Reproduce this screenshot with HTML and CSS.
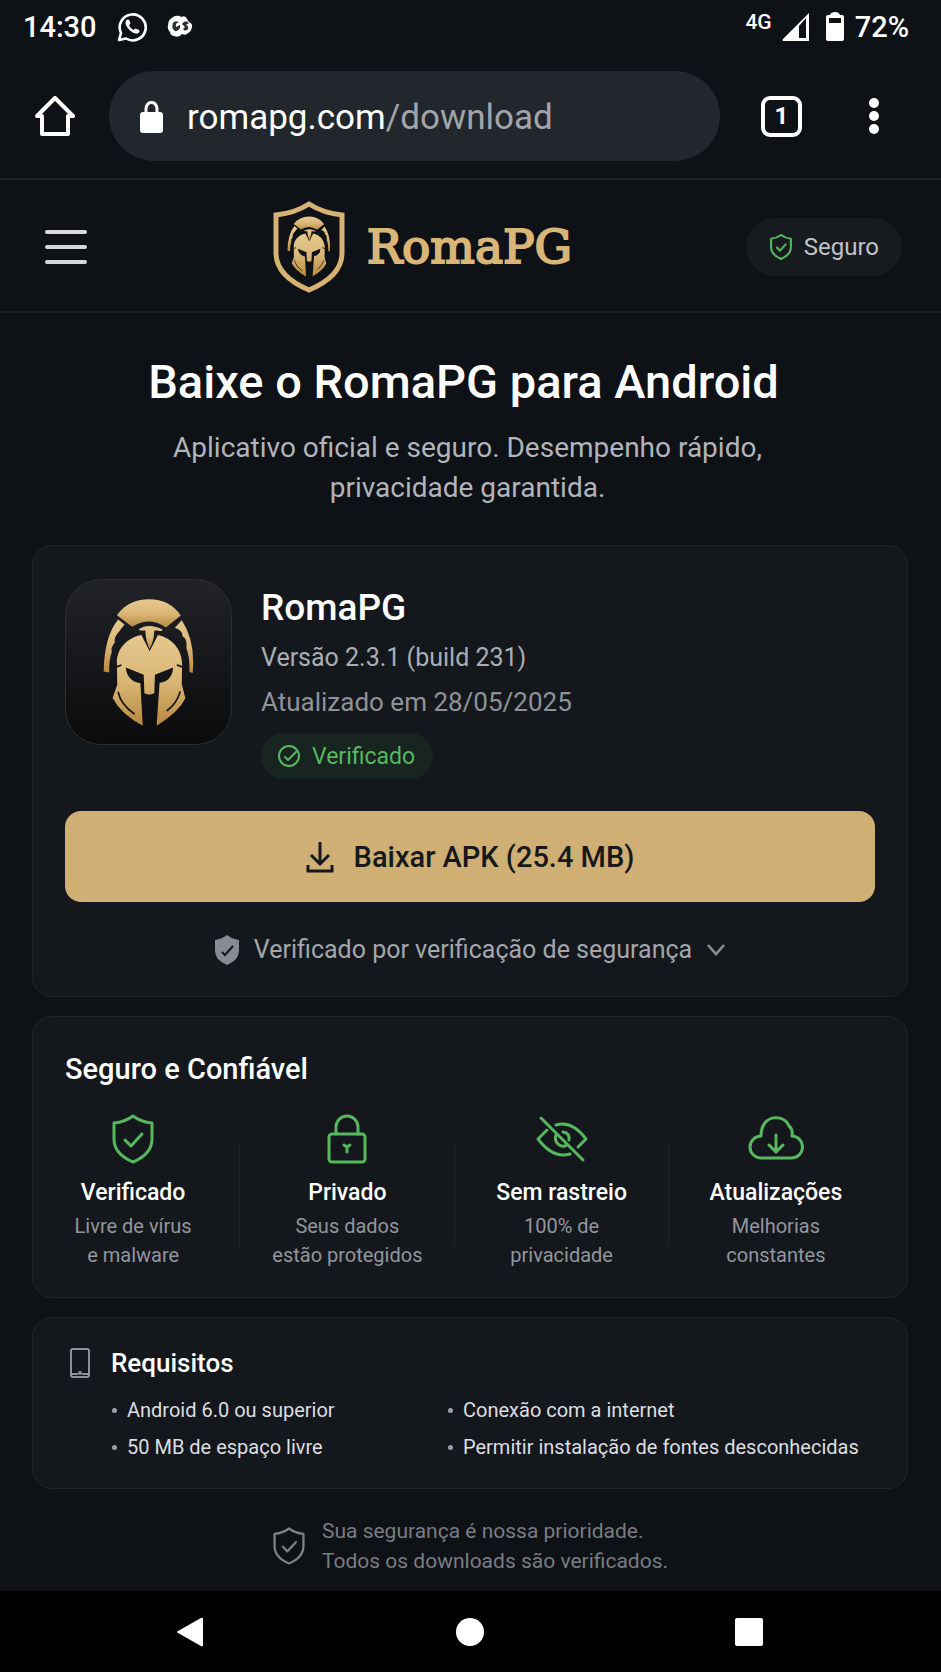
FILE: index.html
```html
<!DOCTYPE html>
<html lang="pt-BR">
<head>
    <meta charset="UTF-8">
    <meta name="viewport" content="width=device-width, initial-scale=1.0">
    <title>RomaPG - Download</title>
    <link rel="stylesheet" href="styles.css">
</head>
<body>
    <!-- shared shapes -->
    <svg class="defs" aria-hidden="true">
        <defs>
            <linearGradient id="gold" x1="0" y1="0" x2="0" y2="1">
                <stop offset="0" stop-color="#e6c88e"/>
                <stop offset="0.5" stop-color="#dab777"/>
                <stop offset="1" stop-color="#b8893f"/>
            </linearGradient>
            <symbol id="helmet" viewBox="186 111 278 388">
                <g fill="url(#gold)">
                    <path d="M228 162Q262 114 325 114Q388 114 421 163L376 199Q350 181 325 181Q300 181 274 197Z"/>
                    <path d="M293 205Q325 184 367 206Q362 212 352 208L341 208Q340 240 327 264Q315 240 314 208Q300 210 293 205Z"/>
                    <path d="M232 175Q190 225 188 332L205 335Q203 300 213 272Q208 262 222 244Q216 232 236 210L251 190Z"/>
                    <path d="M424 177L403 200Q428 208 426 226Q441 232 438 262Q449 290 447 334L457 337Q466 240 424 177Z"/>
                    <path d="M302 222L327 271L352 222C395 232 425 265 425 310L424 370L435 413Q415 455 348 496L357 366Q395 362 398 320L343 342L341 398Q326 406 311 398L309 342L255 320Q258 360 299 368L306 496Q240 460 215 412L229 372L228 305C228 262 260 230 302 222Z"/>
                </g>
                <g fill="none" stroke="#15161a" stroke-width="5" stroke-linecap="round">
                    <path d="M232 395Q240 432 280 460M419 394Q408 430 380 450M225 319L240 313M411 313L427 319"/>
                </g>
            </symbol>
            <symbol id="shield-check" viewBox="0 0 42 50">
                <path d="M21 2Q29 8 40 9V25Q40 40 21 48Q2 40 2 25V9Q13 8 21 2Z"/>
                <path d="M13 26L19 32L30 20"/>
            </symbol>
        </defs>
    </svg>

    <div class="status-bar">
        <div class="status-left">
            <span>14:30</span>
            <svg width="30" height="30" viewBox="0 0 30 30" fill="none">
                <path d="M2 28L4 21A13 13 0 1 1 9 26.500Z" stroke="#fff" stroke-width="2.600" stroke-linejoin="round"/>
                <path d="M9 8.500Q11 6.500 12.500 8.500L13.500 11.500L12 13.500Q13.500 16.500 16.500 18L18.500 16.500L22 18Q23.500 19.500 21.500 21Q18 23 13 18.500Q7 13 9 8.500Z" fill="#fff"/>
            </svg>
            <svg width="26" height="24" viewBox="0 0 26 24" fill="none">
                <path d="M8 1Q13 0 14 2Q19 0 20 4L22 7Q26 9 25 12Q24 17 21 18Q19 21 15 19Q12 23 7 21Q3 20 3 17Q0 14 1 10Q1 4 8 1Z" fill="#fff"/>
                <path d="M6 8Q8 5 12 7Q8 8 9 12L13 10V13Q11 17 8 16Q4 13 6 8Z" fill="#2c3034"/>
                <path d="M15 9Q18 4 22 8L19 10Q22 11 21 14Q18 17 16 14L18 12Z" fill="#2c3034"/>
            </svg>
        </div>
        <div class="status-right">
            <span class="network">4G</span>
            <svg width="28" height="28" viewBox="0 0 28 28" fill="#fff">
                <path fill-rule="evenodd" d="M27 0V28H1Q0 27 1 26ZM17 13V25H24V5Z"/>
            </svg>
            <svg class="battery" width="20" height="30" viewBox="0 0 20 30" fill="#fff">
                <path fill-rule="evenodd" d="M5 3Q6 0 10 0Q14 0 15 3H17Q19 3 19 5V27Q19 29 17 29H3Q1 29 1 27V5Q1 3 3 3ZM4 6V11H16V6Z"/>
            </svg>
            <span>72%</span>
        </div>
    </div>

    <div class="browser-bar">
        <button class="icon-btn" aria-label="Página inicial">
            <svg width="40" height="40" viewBox="0 0 40 40" fill="none" stroke="#fff" stroke-width="4" stroke-linejoin="round" stroke-linecap="round">
                <path d="M7 20H2L20 2L38 20H33V38H7Z"/>
            </svg>
        </button>
        <button class="address">
            <svg width="23" height="32" viewBox="0 0 23 32">
                <rect x="0" y="11" width="23" height="21" rx="3" fill="#fff"/>
                <path d="M6 13V8A5 6 0 0 1 17 8V13" fill="none" stroke="#fff" stroke-width="3"/>
            </svg>
            <span>romapg.com<span class="path">/download</span></span>
        </button>
        <button class="tabs" aria-label="Abas abertas">1</button>
        <button class="icon-btn more" aria-label="Mais opções">
            <svg width="10" height="36" viewBox="0 0 10 36" fill="#fff">
                <circle cx="5" cy="5" r="5"/>
                <circle cx="5" cy="18" r="5"/>
                <circle cx="5" cy="31" r="5"/>
            </svg>
        </button>
    </div>

    <header class="site-header">
        <button class="icon-btn" aria-label="Menu">
            <svg width="42" height="34" viewBox="0 0 42 34" stroke="#d6d8db" stroke-width="4" stroke-linecap="round">
                <path d="M2 2H40M2 17H40M2 32H40"/>
            </svg>
        </button>
        <a class="brand" href="#">
            <svg width="72" height="92" viewBox="0 0 72 92" fill="none">
                <path d="M36 3Q50 12 69 14V52Q69 75 36 89Q3 75 3 52V14Q22 12 36 3Z" stroke="#d6b273" stroke-width="5"/>
                <use href="#helmet" x="14" y="15" width="44" height="61"/>
            </svg>
            <span>RomaPG</span>
        </a>
        <div class="secure-pill">
            <svg class="line-icon green" width="22" height="26" stroke-width="4"><use href="#shield-check"/></svg>
            <span>Seguro</span>
        </div>
    </header>

    <main>
        <section class="hero">
            <h1>Baixe o RomaPG para Android</h1>
            <p>Aplicativo oficial e seguro. Desempenho rápido,<br>privacidade garantida.</p>
        </section>

        <section class="card app-card">
            <div class="app-info">
                <div class="app-icon">
                    <svg width="92" height="129"><use href="#helmet"/></svg>
                </div>
                <div class="app-text">
                    <h2>RomaPG</h2>
                    <p class="version">Versão 2.3.1 (build 231)</p>
                    <p class="updated">Atualizado em 28/05/2025</p>
                    <span class="badge">
                        <svg width="22" height="22" viewBox="0 0 22 22" fill="none" stroke="#57b75f" stroke-width="2" stroke-linecap="round" stroke-linejoin="round">
                            <circle cx="11" cy="11" r="10"/>
                            <path d="M7 12L10 15L18 7"/>
                        </svg>
                        Verificado
                    </span>
                </div>
            </div>
            <button class="download">
                <svg width="28" height="32" viewBox="0 0 28 32" fill="none" stroke="#15191d" stroke-width="3">
                    <path d="M14 1V23M5 14L14 23L23 14M2 24V30H26V24"/>
                </svg>
                Baixar APK (25.4 MB)
            </button>
            <button class="verify">
                <svg width="24" height="30" viewBox="0 0 24 30">
                    <path d="M12 0Q17 4 24 5V16Q24 25 12 30Q0 25 0 16V5Q7 4 12 0Z" fill="#868b94"/>
                    <path d="M7 17L10 20L18 11" fill="none" stroke="#14181c" stroke-width="2"/>
                </svg>
                <span>Verificado por verificação de segurança</span>
                <svg width="18" height="12" viewBox="0 0 18 12" fill="none" stroke="#8b9096" stroke-width="2.500">
                    <path d="M1 1L9 10L17 1"/>
                </svg>
            </button>
        </section>

        <section class="card trust-card">
            <h2>Seguro e Confiável</h2>
            <div class="features">
                <div class="feature">
                    <svg class="line-icon green" width="42" height="50" stroke-width="3"><use href="#shield-check"/></svg>
                    <h3>Verificado</h3>
                    <p>Livre de vírus<br>e malware</p>
                </div>
                <div class="feature">
                    <svg class="line-icon green" width="40" height="50" viewBox="0 0 40 50" stroke-width="3">
                        <rect x="2" y="20" width="36" height="28" rx="3"/>
                        <path d="M9 20V13A11 11 0 0 1 31 13V20M17 31L20 33L23 31M20 33V38"/>
                    </svg>
                    <h3>Privado</h3>
                    <p>Seus dados<br>estão protegidos</p>
                </div>
                <div class="feature">
                    <svg class="line-icon green" width="52" height="50" viewBox="0 0 52 50" stroke-width="3">
                        <path d="M5 4L47 46M20 11Q36 6 50 25L42 33M11 16L2 25Q17 45 34 40M20 21Q18 26 22 30Q26 34 31 31M27 18Q34 19 33 26"/>
                    </svg>
                    <h3>Sem rastreio</h3>
                    <p>100% de<br>privacidade</p>
                </div>
                <div class="feature">
                    <svg class="line-icon green" width="56" height="50" viewBox="0 0 56 50" stroke-width="3">
                        <path d="M13 44A11 11 0 0 1 13 22C13 -1 37 0 41 12Q45 15 44 22A11 11 0 0 1 43 44ZM28 21V37M21 31L28 38L35 31"/>
                    </svg>
                    <h3>Atualizações</h3>
                    <p>Melhorias<br>constantes</p>
                </div>
            </div>
        </section>

        <section class="card req-card">
            <div class="req-title">
                <svg width="20" height="30" viewBox="0 0 20 30" fill="none" stroke="#8d929b" stroke-width="2">
                    <rect x="1" y="1" width="18" height="28" rx="2"/>
                    <path d="M1 26H8M12 26H19"/>
                    <circle cx="10" cy="25" r="1"/>
                </svg>
                <h2>Requisitos</h2>
            </div>
            <ul>
                <li>Android 6.0 ou superior</li>
                <li>Conexão com a internet</li>
                <li>50 MB de espaço livre</li>
                <li>Permitir instalação de fontes desconhecidas</li>
            </ul>
        </section>
    </main>

    <footer>
        <svg class="line-icon gray" width="32" height="38" stroke-width="3"><use href="#shield-check"/></svg>
        <p>Sua segurança é nossa prioridade.<br>Todos os downloads são verificados.</p>
    </footer>

    <nav class="system-nav">
        <button aria-label="Voltar">
            <svg width="28" height="30" viewBox="0 0 28 30" fill="#fff"><path d="M25 1Q27 0 27 2V28Q27 30 25 29L2 16Q0 15 2 14Z"/></svg>
        </button>
        <button aria-label="Início">
            <svg width="28" height="28" viewBox="0 0 28 28" fill="#fff"><circle cx="14" cy="14" r="14"/></svg>
        </button>
        <button aria-label="Recentes">
            <svg width="28" height="28" viewBox="0 0 28 28" fill="#fff"><rect width="28" height="28" rx="2"/></svg>
        </button>
    </nav>
</body>
</html>
```
FILE: styles.css
```css
* {
    box-sizing: border-box;
}
body {
    font-family: Roboto, "Liberation Sans", sans-serif;
    margin: 0;
    min-height: 100vh;
    display: flex;
    flex-direction: column;
    background: #0e1115;
    color: #fff;
}
h1, h2, h3, p, ul {
    margin: 0;
    padding: 0;
}
h1, h2, h3 {
    font-weight: 500;
}
svg {
    display: block;
    flex-shrink: 0;
}
button {
    font-family: inherit;
    border: none;
    padding: 0;
    background: none;
    color: inherit;
    cursor: pointer;
}
.defs {
    position: absolute;
    width: 0;
    height: 0;
}
.line-icon {
    fill: none;
    stroke-linecap: round;
    stroke-linejoin: round;
}
.green {
    stroke: #57b75f;
}
.gray {
    stroke: #7d8288;
}

/* status bar */
.status-bar {
    height: 54px;
    padding: 0 32px 0 23px;
    display: flex;
    justify-content: space-between;
    align-items: center;
    font-size: 29px;
    font-weight: 500;
}
.status-left {
    display: flex;
    align-items: center;
    gap: 20px;
}
.status-right {
    display: flex;
    align-items: center;
    gap: 10px;
}
.network {
    font-size: 21px;
    padding-bottom: 10px;
}
.battery {
    margin-left: 5px;
}

/* browser bar */
.browser-bar {
    height: 126px;
    padding: 17px 62px 17px 35px;
    display: flex;
    align-items: center;
    border-bottom: 2px solid #212428;
}
.address {
    flex: 1;
    height: 90px;
    margin: 0 41px 0 34px;
    padding: 2px 31px 0;
    display: flex;
    align-items: center;
    gap: 24px;
    border-radius: 45px;
    background: #22272d;
    font-size: 35px;
    text-align: left;
}
.path {
    color: #a2a5a9;
}
.tabs {
    width: 41px;
    height: 41px;
    border: 4px solid #fff;
    border-radius: 9px;
    font-size: 24px;
    font-weight: 700;
    line-height: 33px;
}
.more {
    margin-left: 67px;
}

/* site header */
.site-header {
    height: 133px;
    padding: 2px 39px 0 45px;
    display: flex;
    justify-content: space-between;
    align-items: center;
    border-bottom: 2px solid #1d2024;
}
.brand {
    display: flex;
    align-items: center;
    gap: 22px;
    margin-left: 12px;
    font-family: "DejaVu Serif", serif;
    font-size: 47px;
    color: #d9b577;
    -webkit-text-stroke: 2px #d9b577;
    text-decoration: none;
}
.secure-pill {
    display: flex;
    align-items: center;
    gap: 12px;
    height: 58px;
    padding: 0 23px 0 24px;
    border-radius: 29px;
    background: #171b1f;
    color: #c0c3c7;
    font-size: 24px;
}

/* hero */
main {
    padding: 0 33px 0 32px;
}
.hero {
    padding: 39px 5px 37px 0;
    text-align: center;
}
.hero h1 {
    font-size: 47px;
    line-height: 60px;
    margin-bottom: 16px;
    padding-right: 8px;
}
.hero p {
    font-size: 28px;
    line-height: 40px;
    color: #b1b5bb;
}

/* cards */
.card {
    border: 1px solid #212529;
    border-radius: 20px;
    background: #14181c;
    margin-bottom: 19px;
}
.app-card {
    padding: 33px 32px 26px;
}
.app-info {
    display: flex;
    gap: 29px;
}
.app-icon {
    width: 167px;
    height: 166px;
    display: flex;
    align-items: center;
    justify-content: center;
    border: 1px solid #2b2d32;
    border-radius: 36px;
    background: linear-gradient(#212328, #0b0b0c);
}
.app-text h2 {
    font-size: 37px;
    line-height: 44px;
    margin: 7px 0 6px;
}
.app-text p {
    font-size: 25px;
    line-height: 44px;
}
.app-text .version {
    color: #aaadb3;
}
.app-text .updated {
    font-size: 26px;
    color: #8f9299;
}
.badge {
    display: inline-flex;
    align-items: center;
    gap: 12px;
    height: 46px;
    margin-top: 9px;
    padding: 0 18px 0 17px;
    border-radius: 23px;
    background: #17241f;
    color: #57b75f;
    font-size: 23px;
}
.download {
    width: 100%;
    height: 91px;
    margin-top: 32px;
    display: flex;
    align-items: center;
    justify-content: center;
    gap: 20px;
    border-radius: 16px;
    background: #cfaf74;
    color: #15191d;
    font-size: 29px;
    font-weight: 500;
}
.verify {
    width: 100%;
    margin-top: 28px;
    display: flex;
    align-items: center;
    justify-content: center;
    gap: 15px;
    color: #a3a6ac;
    font-size: 25px;
    line-height: 40px;
}

/* trust */
.trust-card {
    padding: 33px 24px 27px 0;
}
.trust-card h2 {
    font-size: 29px;
    line-height: 38px;
    padding-left: 32px;
    margin-bottom: 26px;
}
.features {
    display: grid;
    grid-template-columns: repeat(4, 1fr);
    margin-left: -7px;
    text-align: center;
}
.feature {
    display: flex;
    flex-direction: column;
    align-items: center;
    background: linear-gradient(#212529, #212529) right 29px / 1px 103px no-repeat;
}
.feature:last-child {
    background: none;
}
.feature h3 {
    font-size: 23px;
    line-height: 32px;
    margin: 13px 0 3px;
}
.feature p {
    font-size: 20px;
    line-height: 29px;
    color: #92969c;
}

/* requirements */
.req-card {
    padding: 26px 32px 22px 37px;
    margin-bottom: 27px;
}
.req-title {
    display: flex;
    align-items: center;
    gap: 21px;
}
.req-title h2 {
    font-size: 26px;
    line-height: 38px;
}
.req-card ul {
    display: grid;
    grid-template-columns: 336px 1fr;
    margin: 10px 0 0 42px;
    list-style: none;
    font-size: 20px;
    line-height: 37px;
    color: #dcdee1;
}
.req-card li {
    display: flex;
    align-items: center;
    gap: 10px;
}
.req-card li::before {
    content: "";
    width: 5px;
    height: 5px;
    border-radius: 50%;
    background: #9ea1a6;
}

footer {
    display: flex;
    align-items: center;
    justify-content: center;
    gap: 17px;
    padding-bottom: 15px;
    font-size: 21px;
    line-height: 30px;
    color: #797d83;
}

/* system navigation */
.system-nav {
    flex: 1;
    min-height: 82px;
    padding: 0 178px 0 176px;
    display: flex;
    align-items: center;
    justify-content: space-between;
    background: #000;
}
```
